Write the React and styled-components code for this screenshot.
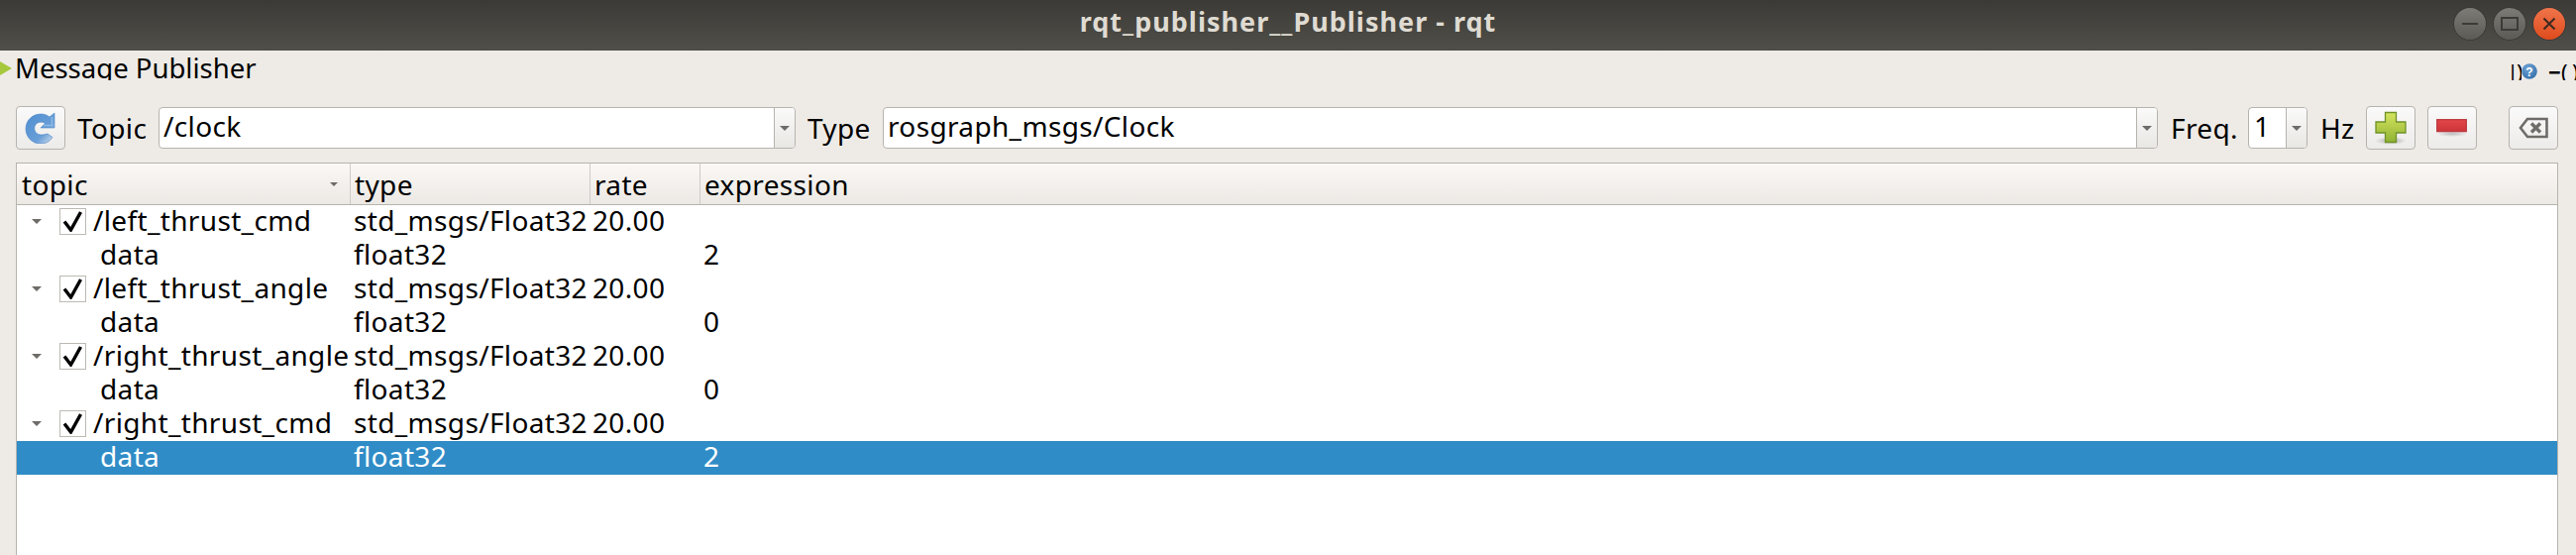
import React from "react";
import styled, { createGlobalStyle } from "styled-components";

const Global = createGlobalStyle`
  html, body { margin: 0; padding: 0; background: #eeebe7; }
  body { font-family: "Noto Sans", "Open Sans", sans-serif; font-size: 28px; letter-spacing: .35px; color: #000; }
`;

const Window = styled.div`
  width: 2600px; height: 560px; display: flex; flex-direction: column; overflow: hidden; background: #eeebe7;
`;
const TitleBar = styled.header`
  flex: 0 0 51px; display: grid; grid-template-columns: 1fr auto 1fr; align-items: center;
  background: linear-gradient(#3b3a36, #504f49);
`;
const Title = styled.div`
  grid-column: 2; font-size: 27px; line-height: 32px; font-weight: 700; color: #dfdbd2; letter-spacing: 1px; margin-top: -8px;
`;
const WinButtons = styled.div`
  grid-column: 3; justify-self: end; display: flex; gap: 8px; padding: 0 11px 4px 0;
`;
const WinButton = styled.div`
  width: 32px; height: 32px; border-radius: 50%; display: flex; align-items: center; justify-content: center;
  background: ${p => p.$close ? "linear-gradient(#f0744a, #df4b1c)" : "linear-gradient(#7c7b75, #5b5a54)"};
  box-shadow: 0 0 0 1px #3a3935, 0 1px 1px rgba(255,255,255,.12);
`;
const DockBar = styled.div`
  flex: 0 0 30px; height: 30px; overflow: hidden; display: flex; justify-content: space-between; align-items: flex-start;
`;
const DockTitle = styled.div`
  display: flex; align-items: center; gap: 3px; font-size: 27.5px; line-height: 36px; letter-spacing: 0;
  white-space: nowrap;
`;
const DockTools = styled.div`
  display: flex; align-items: flex-start; height: 30px; padding: 13px 0 0 0; box-sizing: border-box;
  font-size: 22px; line-height: 17px; letter-spacing: 0;
`;
const ClipGlyph = styled.span`
  width: ${p => p.$w}px; font-weight: ${p => p.$b ? 700 : 400}; overflow: hidden; white-space: pre; display: block; height: 17px;
`;
const Toolbar = styled.div`
  flex: 0 0 43px; margin-top: 26px; padding: 0 18px 0 16px; display: flex; align-items: center;
`;
const ToolButton = styled.button`
  width: 50px; height: 44px; padding: 0; margin-left: ${p => p.$ml || 0}px; border: 1px solid #b7b3ad; border-radius: 4px;
  background: linear-gradient(#fbfafa, #ecebe9); display: flex; align-items: center; justify-content: center; flex: none;
`;
const Label = styled.span`
  margin-left: ${p => p.$ml}px; white-space: nowrap; line-height: 40px; flex: none; width: ${p => p.$w}px;
`;
const Combo = styled.div`
  flex: 0 0 ${p => p.$w}px; height: 42px; box-sizing: border-box; display: flex; border: 1px solid #b7b3ad; border-radius: 4px; overflow: hidden; background: #fff;
`;
const ComboText = styled.div`
  flex: 1; padding-left: ${p => p.$pad || 4}px; line-height: 37px; white-space: nowrap;
`;
const ComboArrow = styled.div`
  flex: 0 0 20px; border-left: 1px solid #b7b3ad; background: linear-gradient(#fafafa, #e9e7e4); display: flex; align-items: center; justify-content: center;
`;
const Caret = styled.i`
  display: block; width: 0; height: 0; border-left: ${p => p.$s || 5}px solid transparent; border-right: ${p => p.$s || 5}px solid transparent; border-top: ${p => (p.$s || 5)}px solid ${p => p.$c || "#6e6c68"};
`;
const Table = styled.div`
  flex: 1; margin: 13px 18px 0 16px; border: 1px solid #b7b3ad; border-bottom: 0; background: #fff; display: flex; flex-direction: column;
`;
const Columns = "336px 242px 111px 1fr";
const HeaderRow = styled.div`
  display: grid; grid-template-columns: ${Columns}; height: 41px; border-bottom: 1px solid #b7b3ad;
  background: linear-gradient(#fbf8f5, #ece9e5);
`;
const HeaderCell = styled.div`
  display: flex; align-items: center; justify-content: space-between; padding: 0 12px 0 4px; line-height: 36px;
  &:first-child { padding-left: 5px; }
  & + & { border-left: 1px solid #cfccc7; }
`;
const Row = styled.div`
  display: grid; grid-template-columns: ${Columns}; height: 34px; line-height: 31px; white-space: nowrap;
  background: ${p => p.$selected ? "#308cc6" : "#fff"}; color: ${p => p.$selected ? "#fff" : "#000"};
`;
const TopicCell = styled.div`
  display: flex; align-items: center; height: 31px; padding-left: ${p => p.$child ? 84 : 15}px;
`;
const Cell = styled.div`
  padding-left: ${p => p.$pad}px;
`;
const Expander = styled.span`
  flex: 0 0 28px; display: flex; justify-content: flex-start; margin-top: 2px;
`;
const CheckBox = styled.span`
  width: 27px; height: 27px; box-sizing: border-box; border: 1px solid #bdbab5; background: #fff; display: flex; align-items: center; justify-content: center; margin: 2px 7px 0 0; flex: none;
`;

const Refresh = () => (
  <svg width="32" height="32" viewBox="0 0 32 32">
    <defs>
      <linearGradient id="rg" x1="0" y1="0" x2="1" y2="1">
        <stop offset="0" stopColor="#4f8ed0" /><stop offset=".65" stopColor="#6a9fd8" /><stop offset="1" stopColor="#dfe6ee" />
      </linearGradient>
    </defs>
    <path d="M30 1v15H16l4.500-4.500C17 9 11.500 10 10 14.500 8.800 19 12 23 16.500 23c2.500 0 4-.5 6.500-1l5 3.500C25 30 21 32 16 32 7 32 1 25 1 17 1 8 8 2 16.500 2c3 0 6 1 8.500 3z" fill="url(#rg)" stroke="#4a86c8" strokeWidth=".6" />
    <path d="M27.500 5v8.500H19" fill="none" stroke="#8fbbe6" strokeWidth="1.500" />
  </svg>
);
const Plus = () => (
  <svg width="32" height="34" viewBox="0 0 32 34">
    <defs>
      <linearGradient id="pg" x1="0" y1="0" x2="0" y2="1"><stop offset="0" stopColor="#d6e45f" /><stop offset="1" stopColor="#8fb233" /></linearGradient>
      <radialGradient id="ps"><stop offset="0" stopColor="#777" stopOpacity=".55" /><stop offset="1" stopColor="#777" stopOpacity="0" /></radialGradient>
    </defs>
    <ellipse cx="16" cy="30" rx="16" ry="4" fill="url(#ps)" />
    <path d="M10.500 1.500h11v9.500h9.500v11h-9.500v9.500h-11V22H1V11h9.500z" fill="url(#pg)" stroke="#6f9228" strokeWidth="1.300" />
  </svg>
);
const Minus = () => (
  <svg width="32" height="20" viewBox="0 0 32 20">
    <defs>
      <linearGradient id="mg" x1="0" y1="0" x2="0" y2="1"><stop offset="0" stopColor="#e4474c" /><stop offset="1" stopColor="#cc3338" /></linearGradient>
      <radialGradient id="ms"><stop offset="0" stopColor="#888" stopOpacity=".5" /><stop offset="1" stopColor="#888" stopOpacity="0" /></radialGradient>
    </defs>
    <ellipse cx="16" cy="16" rx="16" ry="3" fill="url(#ms)" />
    <rect x=".7" y="1.700" width="29.600" height="12" fill="url(#mg)" stroke="#b7343a" strokeWidth="1.200" />
  </svg>
);
const ClearIcon = () => (
  <svg width="30" height="22" viewBox="0 0 30 22">
    <path d="M9 2h19.500v18H9L2 11z" fill="none" stroke="#6d6c68" strokeWidth="2.600" />
    <path d="M13 6.500l9 9M22 6.500l-9 9" stroke="#6d6c68" strokeWidth="3.400" />
  </svg>
);
const Check = () => (
  <svg width="21" height="21" viewBox="0 0 21 21">
    <path d="M2 10.500l6.500 8.500L18.500 1" fill="none" stroke="#000" strokeWidth="3.400" />
  </svg>
);
const HelpIcon = () => (
  <svg width="16" height="16" viewBox="0 0 16 16">
    <defs><radialGradient id="hg" cx=".4" cy=".3" r=".8"><stop offset="0" stopColor="#6fa3d4" /><stop offset="1" stopColor="#2e6ca8" /></radialGradient></defs>
    <circle cx="8" cy="8" r="7.800" fill="url(#hg)" />
    <text x="8" y="12.500" textAnchor="middle" fontSize="12" fontWeight="700" fill="#fff" fontFamily="Liberation Sans">?</text>
  </svg>
);

const topics = [
  { name: "/left_thrust_cmd", value: "2" },
  { name: "/left_thrust_angle", value: "0" },
  { name: "/right_thrust_angle", value: "0" },
  { name: "/right_thrust_cmd", value: "2", selected: true },
];

export default function App() {
  return (
    <Window>
      <Global />
      <TitleBar>
        <Title>rqt_publisher__Publisher - rqt</Title>
        <WinButtons>
          <WinButton>
            <svg width="18" height="4" viewBox="0 0 18 4"><rect width="16" y="1" x="1" height="2" fill="#3c3b37" /></svg>
          </WinButton>
          <WinButton>
            <svg width="18" height="14" viewBox="0 0 18 14"><rect x="1" y="1" width="16" height="12" fill="none" stroke="#3c3b37" strokeWidth="2" /></svg>
          </WinButton>
          <WinButton $close>
            <svg width="14" height="14" viewBox="0 0 14 14"><path d="M1.500 1.500l11 11M12.500 1.500l-11 11" stroke="#3c2a20" strokeWidth="2" /></svg>
          </WinButton>
        </WinButtons>
      </TitleBar>
      <DockBar>
        <DockTitle>
          <svg width="12" height="16" viewBox="0 0 12 16"><path d="M0 1l12 7L0 15z" fill="#a6c83c" /></svg>
          Message Publisher
        </DockTitle>
        <DockTools>
          <ClipGlyph $w={10}>|</ClipGlyph>
          <ClipGlyph $w={5}>)</ClipGlyph>
          <HelpIcon />
          <ClipGlyph $w={11} />
          <ClipGlyph $w={13} $b>−</ClipGlyph>
          <ClipGlyph $w={11}>(</ClipGlyph>
          <ClipGlyph $w={4}>)</ClipGlyph>
        </DockTools>
      </DockBar>
      <Toolbar>
        <ToolButton aria-label="refresh"><Refresh /></ToolButton>
        <Label $ml={12} $w={82}>Topic</Label>
        <Combo $w={643}>
          <ComboText>/clock</ComboText>
          <ComboArrow><Caret /></ComboArrow>
        </Combo>
        <Label $ml={12} $w={76}>Type</Label>
        <Combo $w={1287}>
          <ComboText>rosgraph_msgs/Clock</ComboText>
          <ComboArrow><Caret /></ComboArrow>
        </Combo>
        <Label $ml={13} $w={78}>Freq.</Label>
        <Combo $w={60}>
          <ComboText $pad={5}>1</ComboText>
          <ComboArrow><Caret /></ComboArrow>
        </Combo>
        <Label $ml={13} $w={46}>Hz</Label>
        <ToolButton aria-label="add"><Plus /></ToolButton>
        <ToolButton aria-label="remove" $ml={12}><Minus /></ToolButton>
        <ToolButton aria-label="clear" $ml={32}><ClearIcon /></ToolButton>
      </Toolbar>
      <Table>
        <HeaderRow>
          <HeaderCell>topic <Caret $s={4} /></HeaderCell>
          <HeaderCell>type</HeaderCell>
          <HeaderCell>rate</HeaderCell>
          <HeaderCell>expression</HeaderCell>
        </HeaderRow>
        {topics.map(t => (
          <React.Fragment key={t.name}>
            <Row>
              <TopicCell>
                <Expander><Caret /></Expander>
                <CheckBox><Check /></CheckBox>
                {t.name}
              </TopicCell>
              <Cell $pad={4}>std_msgs/Float32</Cell>
              <Cell $pad={3}>20.00</Cell>
              <Cell />
            </Row>
            <Row $selected={t.selected}>
              <TopicCell $child>data</TopicCell>
              <Cell $pad={4}>float32</Cell>
              <Cell />
              <Cell $pad={4}>{t.value}</Cell>
            </Row>
          </React.Fragment>
        ))}
      </Table>
    </Window>
  );
}
